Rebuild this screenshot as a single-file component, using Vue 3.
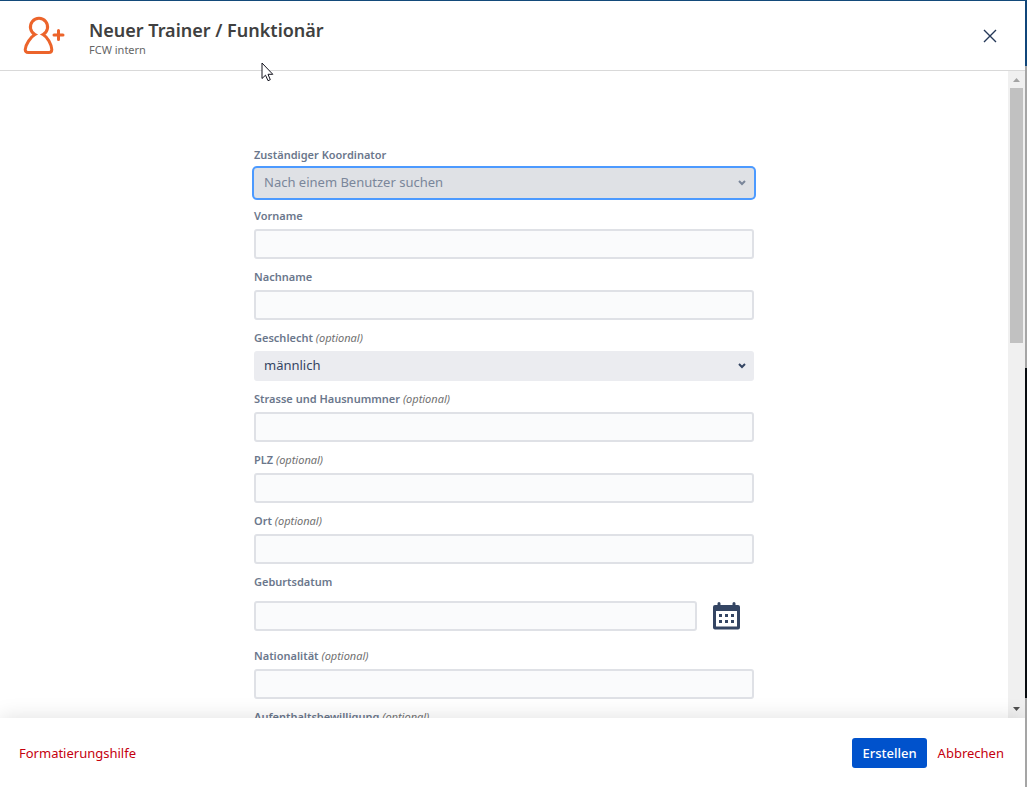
<script setup>
import { ref } from 'vue'

const subtitle = 'FCW intern'
const coordinator = ref('')

const fields = ref([
  { id: 'firstname', label: 'Vorname', type: 'text', value: '' },
  { id: 'lastname', label: 'Nachname', type: 'text', value: '' },
  { id: 'gender', label: 'Geschlecht', type: 'select', optional: true, value: 'männlich' },
  { id: 'street', label: 'Strasse und Hausnummner', type: 'text', optional: true, value: '' },
  { id: 'zip', label: 'PLZ', type: 'text', optional: true, value: '' },
  { id: 'city', label: 'Ort', type: 'text', optional: true, value: '' },
  { id: 'birthday', label: 'Geburtsdatum', type: 'date', value: '' },
  { id: 'nationality', label: 'Nationalität', type: 'text', optional: true, value: '' },
  { id: 'permit', label: 'Aufenthaltsbewilligung', type: 'text', optional: true, value: '' }
])
</script>

<template>
  <div class="page">
    <div class="dialog" role="dialog" aria-labelledby="dialog-title">
      <header class="dialog-header">
        <svg class="user-icon" width="42" height="40" viewBox="0 0 42 40" aria-hidden="true">
          <path
            d="M12 18.500A8.600 8.600 0 1 1 20 18.500C24.500 21 28.500 28.500 28.800 33.500Q28.800 36.500 25.800 36.500H5.200Q2.200 36.500 2.200 33.500C2.500 28.500 7.500 21 12 18.500Z"
          />
          <path d="M35.500 14.500V23.500M31 19H40" />
        </svg>
        <div class="titles">
          <h1 id="dialog-title">Neuer Trainer / Funktionär</h1>
          <p>{{ subtitle }}</p>
        </div>
        <button class="close" type="button" aria-label="Schliessen">
          <svg width="14" height="14" viewBox="0 0 14 14">
            <path d="M1 1L13 13M13 1L1 13" />
          </svg>
        </button>
      </header>

      <div class="dialog-body">
        <form id="trainer-form" class="form" @submit.prevent>
          <div class="field">
            <label for="coordinator">Zuständiger Koordinator</label>
            <div class="select focused">
              <select id="coordinator" v-model="coordinator">
                <option value="">Nach einem Benutzer suchen</option>
              </select>
              <svg class="chevron" width="8" height="6" viewBox="0 0 8 6">
                <path d="M1 1L4 4L7 1" />
              </svg>
            </div>
          </div>

          <div v-for="field in fields" :key="field.id" class="field">
            <label :for="field.id"
              >{{ field.label }} <em v-if="field.optional">(optional)</em></label
            >
            <div v-if="field.type === 'select'" class="select">
              <select :id="field.id" v-model="field.value">
                <option>männlich</option>
                <option>weiblich</option>
              </select>
              <svg class="chevron" width="8" height="6" viewBox="0 0 8 6">
                <path d="M1 1L4 4L7 1" />
              </svg>
            </div>
            <div v-else-if="field.type === 'date'" class="date">
              <input :id="field.id" v-model="field.value" type="text" />
              <button type="button" aria-label="Datum wählen">
                <svg width="28" height="28" viewBox="0 0 28 28">
                  <path
                    fill-rule="evenodd"
                    d="M2 3H4.500V1.500Q4.500 0 6 0T7.500 1.500V3H19.500V1.500Q19.500 0 21 0T22.500 1.500V3H25Q27 3 27 5V25.500Q27 27.500 25 27.500H2Q0 27.500 0 25.500V5Q0 3 2 3ZM3 9V24.500H24V9Z"
                  />
                  <path
                    d="M6 12h3v3H6zM12 12h3v3h-3zM18 12h3v3h-3zM6 18h3v3H6zM12 18h3v3h-3zM18 18h3v3h-3z"
                  />
                </svg>
              </button>
            </div>
            <input v-else :id="field.id" v-model="field.value" type="text" />
          </div>
        </form>

        <div class="scrollbar" aria-hidden="true">
          <svg width="17" height="17" viewBox="0 0 17 17">
            <path class="arrow-up" d="M5 11L8.500 7L12 11Z" />
          </svg>
          <div class="track"><div class="thumb"></div></div>
          <svg width="17" height="17" viewBox="0 0 17 17">
            <path class="arrow-down" d="M5 6L8.500 10L12 6Z" />
          </svg>
        </div>
      </div>

      <footer class="dialog-footer">
        <a href="#">Formatierungshilfe</a>
        <div class="actions">
          <button class="submit" type="submit" form="trainer-form">Erstellen</button>
          <a href="#">Abbrechen</a>
        </div>
      </footer>
    </div>

    <div class="backdrop" aria-hidden="true">
      <div class="top"></div>
      <div class="upper"></div>
      <div class="dark"></div>
      <div class="lower"></div>
    </div>

    <svg class="cursor" width="13" height="20" viewBox="0 0 13 20" aria-hidden="true">
      <path d="M1 1V16.500L4.500 13.200L7 18.700L9.300 17.700L7 12.300H11.800Z" />
    </svg>
  </div>
</template>

<style>
body {
  margin: 0;
  background: #fff;
}
</style>

<style scoped>
.page {
  position: relative;
  display: flex;
  box-sizing: border-box;
  height: 100vh;
  overflow: hidden;
  border-top: 1px solid #134a7a;
  font-family: 'Segoe UI', 'Noto Sans', sans-serif;
  font-size: 13px;
  color: #344563;
}

.dialog {
  flex: 1;
  min-width: 0;
  display: flex;
  flex-direction: column;
}

.dialog-header {
  display: flex;
  align-items: center;
  padding: 13px 28px 12px 23px;
  border-bottom: 1px solid #d9d9d9;
}

.user-icon {
  fill: none;
  stroke: #ec642b;
  stroke-width: 3;
  stroke-linecap: round;
}

.titles {
  flex: 1;
  margin-left: 24px;
  padding-top: 4px;
}

.titles h1 {
  margin: 0;
  font-size: 18px;
  font-weight: 600;
  line-height: 24px;
  color: #404040;
}

.titles p {
  margin: 0;
  font-size: 11px;
  line-height: 16px;
  color: #666;
}

button {
  padding: 0;
  border: 0;
  background: none;
  font: inherit;
  cursor: pointer;
}

.close svg {
  display: block;
  fill: none;
  stroke: #253858;
  stroke-width: 1.4;
}

.dialog-body {
  flex: 1;
  min-height: 0;
  display: flex;
  overflow: hidden;
}

.form {
  flex: 1;
  display: flex;
  flex-direction: column;
  align-items: center;
  padding-top: 66px;
}

.field {
  width: 500px;
  max-width: 90%;
  padding-top: 8px;
}

.field label {
  display: block;
  margin-bottom: 3px;
  font-size: 11px;
  font-weight: 600;
  line-height: 20px;
  color: #6b778c;
}

.field em {
  font-weight: 400;
  color: #707070;
}

input,
select {
  display: block;
  box-sizing: border-box;
  width: 100%;
  height: 30px;
  padding: 0 8px;
  border: 2px solid #dfe1e6;
  border-radius: 3px;
  outline: 0;
  background: #fafbfc;
  font: inherit;
  color: inherit;
}

select {
  appearance: none;
  padding-bottom: 2px;
  border-color: #ebecf0;
  background: #ebecf0;
}

.select {
  display: flex;
  align-items: center;
}

.chevron {
  flex: none;
  margin-left: -16px;
  margin-right: 8px;
  fill: none;
  stroke: #344563;
  stroke-width: 2;
  pointer-events: none;
}

.focused select {
  border-color: #dfe1e5;
  background: #dfe1e5;
  box-shadow: 0 0 0 2px #4c9aff;
  color: #7a869a;
}

.focused .chevron {
  stroke: #7a869a;
}

.date {
  display: flex;
  align-items: center;
  gap: 16px;
  padding: 6px 13px 7px 0;
}

.date button {
  height: 30px;
}

.date svg {
  display: block;
  fill: #344563;
}

.scrollbar {
  display: flex;
  flex-direction: column;
  width: 17px;
  background: #f0f0f0;
}

.scrollbar svg {
  display: block;
}

.arrow-up {
  fill: #a3a3a3;
}

.arrow-down {
  fill: #505050;
}

.track {
  flex: 1;
  padding: 0 2px;
}

.thumb {
  height: 255px;
  background: #c1c1c1;
}

.dialog-footer {
  z-index: 1;
  display: flex;
  align-items: center;
  justify-content: space-between;
  padding: 20px 21px 19px 19px;
  background: #fff;
  box-shadow: 0 0 20px rgba(0, 0, 0, 0.13);
}

.actions {
  display: flex;
  align-items: center;
  gap: 11px;
}

.dialog-footer a {
  color: #c5000e;
  text-decoration: none;
}

.submit {
  height: 30px;
  padding: 0 10px;
  border-radius: 3px;
  background: #0052cc;
  font-weight: 500;
  color: #fff;
}

.backdrop {
  z-index: 2;
  display: flex;
  flex-direction: column;
  width: 2px;
}

.top {
  flex: 65;
  background: #10467a;
}

.upper {
  flex: 302;
  background: #a5a5a5;
}

.dark {
  flex: 330;
  background: #080c10;
}

.lower {
  flex: 89;
  background: #a5a5a5;
}

.cursor {
  position: absolute;
  top: 61px;
  left: 261px;
  fill: #fff;
  stroke: #14141f;
  stroke-width: 1;
}
</style>
